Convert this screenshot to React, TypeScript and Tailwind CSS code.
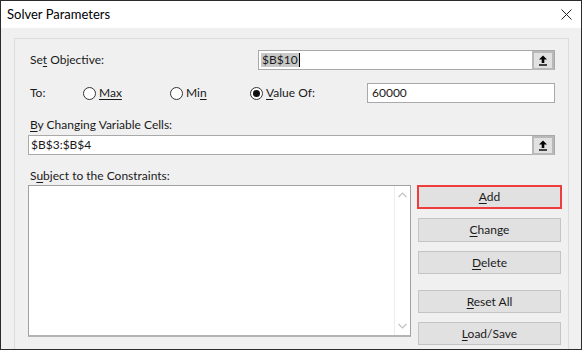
import React from "react";

const font = { fontFamily: "Lato, 'Noto Sans', sans-serif" };

function U({ children }: { children: React.ReactNode }) {
  return <span className="underline underline-offset-2">{children}</span>;
}

function PickButton() {
  return (
    <div className="w-[22px] h-[19px] bg-[#e1e1e1] border-2 border-[#b9b9b9] flex items-center justify-center">
      <svg width="10" height="11" viewBox="0 0 10 11">
        <path d="M5 0.5 L9 4.5 L6.3 4.5 L6.3 8 L3.7 8 L3.7 4.5 L1 4.5 Z" fill="#000" />
        <rect x="1" y="9.3" width="8" height="1.4" fill="#000" />
      </svg>
    </div>
  );
}

function Radio({ checked, label, width }: { checked?: boolean; label: React.ReactNode; width: string }) {
  return (
    <div className={`flex items-center ${width}`}>
      <div className="w-[13px] h-[13px] rounded-full border border-[#333] bg-white flex items-center justify-center">
        {checked && <div className="w-[7px] h-[7px] rounded-full bg-[#111]" />}
      </div>
      <span className="ml-[3px]">{label}</span>
    </div>
  );
}

function Btn({ children, cls, active }: { children: React.ReactNode; cls: string; active?: boolean }) {
  return (
    <div
      className={`${cls} flex items-center justify-center bg-[#e1e1e1] ${
        active ? "border-2 border-[#ef3d3d] -mx-px" : "border border-[#c4c4c4]"
      }`}
    >
      {children}
    </div>
  );
}

export default function App() {
  return (
    <div className="w-[582px] h-[350px] overflow-hidden border border-[#2b2b2b] text-[12px] text-[#1a1a1a] bg-[#f0f0f0] flex flex-col" style={font}>
      <div className="h-[27px] shrink-0 bg-white flex items-center justify-between pl-[6px] pr-[9px]">
        <span className="text-[13px] text-black">Solver Parameters</span>
        <svg width="11" height="11" viewBox="0 0 11 11">
          <path d="M0.5 0.5 L10.5 10.5 M10.5 0.5 L0.5 10.5" stroke="#222" strokeWidth="1" />
        </svg>
      </div>
      <div className="ml-[13px] mt-[10px] w-[555px] h-[340px] shrink-0 border border-[#dcdcdc] flex flex-col">
        <div className="mt-[11px] h-[20px] flex items-center">
          <span className="pl-[15px] w-[243px]">
            Se<U>t</U> Objective:
          </span>
          <div className="w-[297px] h-[20px] bg-white border border-[#a9a9a9] flex items-center justify-between pl-[2px] pr-0">
            <span className="flex items-center">
              <span className="bg-[#c8c8c8] px-px leading-[14px]">$B$10</span>
              <span className="w-px h-[14px] bg-black" />
            </span>
            <PickButton />
          </div>
        </div>
        <div className="mt-[13px] h-[20px] flex items-center">
          <span className="pl-[15px] w-[68px]">To:</span>
          <Radio width="w-[87px]" label={<U>Max</U>} />
          <Radio width="w-[80px]" label={<>Mi<U>n</U></>} />
          <Radio width="w-[117px]" checked label={<><U>V</U>alue Of:</>} />
          <div className="w-[188px] h-[20px] bg-white border border-[#a9a9a9] flex items-center pl-[4px]">60000</div>
        </div>
        <div className="mt-[14px] h-[16px] pl-[15px] flex items-center">
          <span>
            <U>B</U>y Changing Variable Cells:
          </span>
        </div>
        <div className="mt-[2px] ml-[13px] w-[527px] h-[20px] bg-white border border-[#a9a9a9] flex items-center justify-between pl-[2px]">
          <span>$B$3:$B$4</span>
          <PickButton />
        </div>
        <div className="mt-[13px] h-[16px] pl-[15px] flex items-center">
          <span>
            S<U>u</U>bject to the Constraints:
          </span>
        </div>
        <div className="mt-[1px] ml-[13px] flex">
          <div className="w-[383px] h-[152px] bg-white border border-[#a0a0a0] border-b-2 border-b-[#b4b4b4] flex justify-end">
            <div className="w-[16px] border-l border-[#ececec] flex flex-col items-center justify-between py-[6px]">
              <svg width="9" height="6" viewBox="0 0 9 6">
                <path d="M0.5 5 L4.5 1 L8.5 5" stroke="#c2c2c2" fill="none" strokeWidth="1.2" />
              </svg>
              <svg width="9" height="6" viewBox="0 0 9 6">
                <path d="M0.5 1 L4.5 5 L8.5 1" stroke="#c2c2c2" fill="none" strokeWidth="1.2" />
              </svg>
            </div>
          </div>
          <div className="ml-[7px] w-[143px] flex flex-col">
            <Btn cls="h-[24px]" active>
              <span>
                <U>A</U>dd
              </span>
            </Btn>
            <Btn cls="mt-[9px] h-[24px]">
              <span>
                <U>C</U>hange
              </span>
            </Btn>
            <Btn cls="mt-[9px] h-[23px]">
              <span>
                <U>D</U>elete
              </span>
            </Btn>
            <Btn cls="mt-[16px] h-[23px]">
              <span>
                <U>R</U>eset All
              </span>
            </Btn>
            <Btn cls="mt-[9px] h-[23px]">
              <span>
                <U>L</U>oad/Save
              </span>
            </Btn>
          </div>
        </div>
      </div>
    </div>
  );
}
